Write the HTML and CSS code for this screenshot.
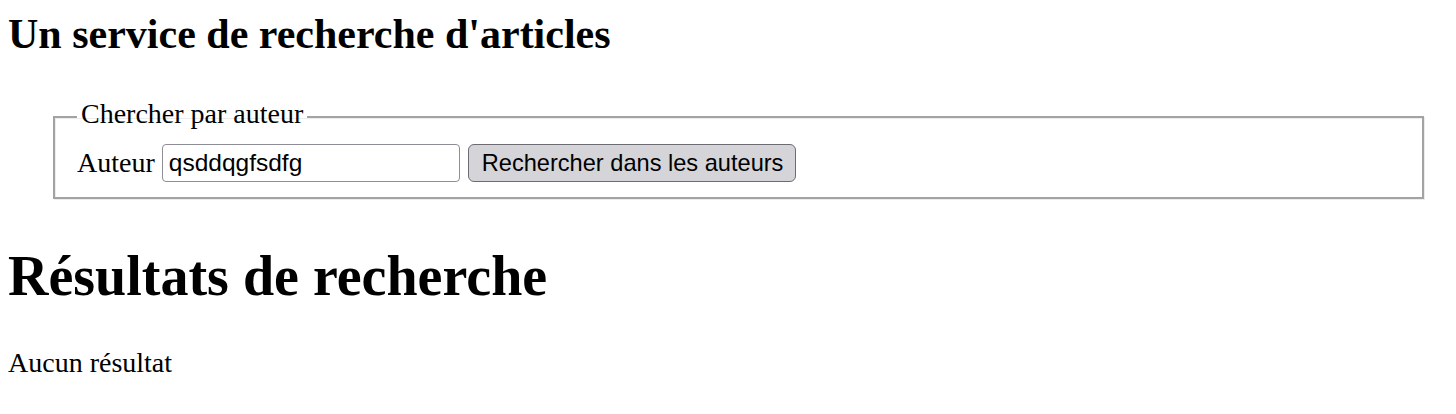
FILE: index.html
```html
<!DOCTYPE html>
<html lang="fr">
<head>
<meta charset="utf-8">
<title>Recherche d'articles</title>
<link rel="stylesheet" href="styles.css">
</head>
<body>
<h2 class="title">Un service de recherche d'articles</h2>
<form class="search">
  <fieldset class="box">
    <legend class="box-legend">Chercher par auteur</legend>
    <div class="row">
      <label class="label" for="auteur">Auteur</label>
      <input class="field" id="auteur" type="text" value="qsddqgfsdfg">
      <button class="btn" type="button">Rechercher dans les auteurs</button>
    </div>
  </fieldset>
</form>
<h1 class="results">Résultats de recherche</h1>
<p class="empty">Aucun résultat</p>
</body>
</html>
```
FILE: styles.css
```css
html, body {
  margin: 0;
  padding: 0;
  background: #fff;
}
body {
  padding: 0 8px;
  font-family: "Liberation Serif", "Times New Roman", serif;
  font-size: 28px;
  color: #000;
}
.title {
  margin: 10px 0 0;
  font-size: 42px;
  line-height: 48px;
  font-weight: bold;
}
.search {
  margin: 0;
  padding-top: 42px;
}
.box {
  margin: 0 24px 0 45px;
  padding: 11px 22px 15px;
  border: 2px solid #a3a3a3;
  box-shadow: 1px 1px 0 #ececec, inset 1px 1px 0 #ececec;
  min-width: 0;
}
.box-legend {
  padding: 0 4px 5px;
  line-height: 28px;
}
.row {
  display: flex;
  align-items: center;
  height: 38px;
}
.label {
  margin-right: 7px;
}
.field {
  box-sizing: border-box;
  width: 298px;
  height: 38px;
  margin: 0 8px 0 0;
  padding: 0 6px;
  border: 1.5px solid #8e8e98;
  border-radius: 4px;
  background: #fff;
  font-family: "Liberation Sans", Arial, sans-serif;
  font-size: 24.5px;
  color: #000;
}
.btn {
  box-sizing: border-box;
  height: 38px;
  margin: 0;
  padding: 0 12px 0 13px;
  border: 1.5px solid #6c6c72;
  border-radius: 6px;
  background: #d5d5d9;
  font-family: "Liberation Sans", Arial, sans-serif;
  font-size: 23.6px;
  color: #000;
}
.results {
  margin: 45px 0 0;
  font-size: 56px;
  line-height: 64px;
  font-weight: bold;
}
.empty {
  margin: 39px 0 0;
  line-height: 32px;
}
```
